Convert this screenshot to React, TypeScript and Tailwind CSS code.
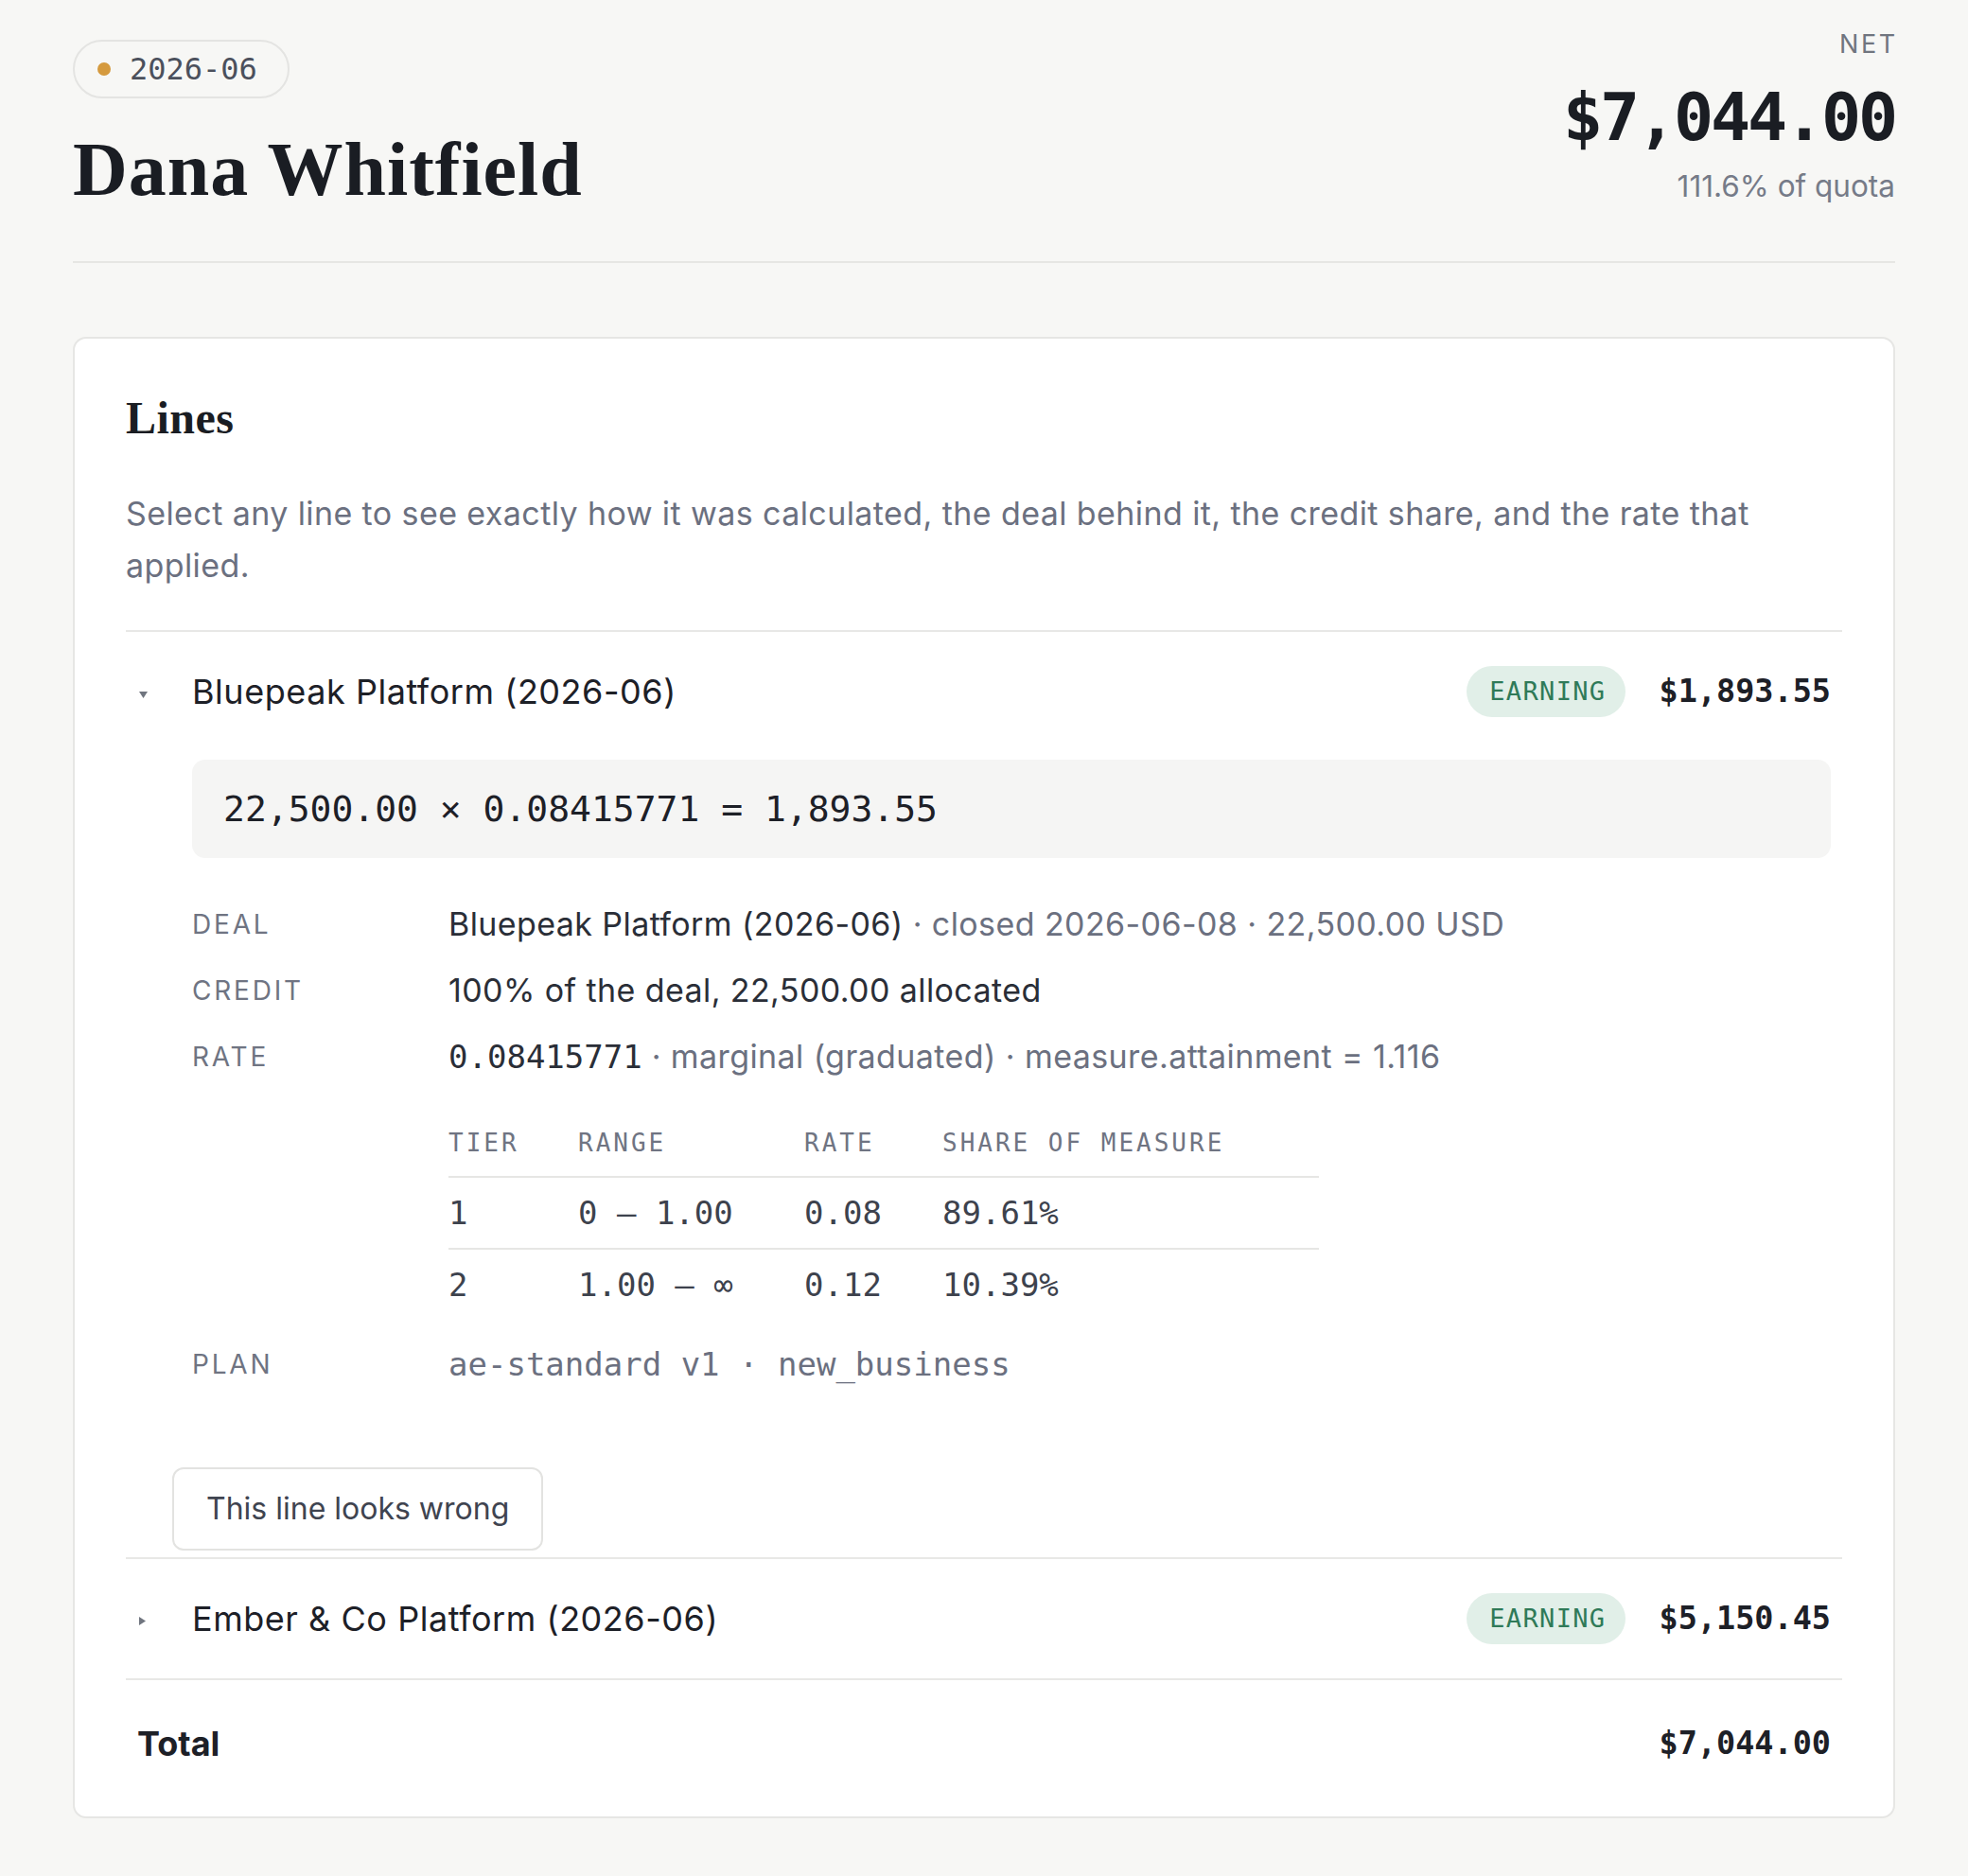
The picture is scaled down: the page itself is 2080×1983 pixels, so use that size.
import React from "react";

const MONO = "font-['DejaVu_Sans_Mono',monospace]";
const SERIF = "font-['Liberation_Serif',serif]";

function Caret({ open }: { open: boolean }) {
  return open ? (
    <svg width="9" height="7" viewBox="0 0 9 7" className="mt-[6px]">
      <path d="M0 0h9L4.5 7z" fill="#70757f" />
    </svg>
  ) : (
    <svg width="7" height="9" viewBox="0 0 7 9" className="mt-[4px]">
      <path d="M0 0l7 4.5L0 9z" fill="#70757f" />
    </svg>
  );
}

function Badge() {
  return (
    <span
      className={`${MONO} inline-flex h-[54px] items-center rounded-full bg-[#e1efe8] pl-[24px] pr-[21px] text-[27px] tracking-[0.05em] text-[#2f7a58]`}
    >
      EARNING
    </span>
  );
}

function LineHeader({ open, name, amount }: { open: boolean; name: string; amount: string }) {
  return (
    <div className="flex items-center px-[12px] py-[36px]">
      <span className="flex w-[58px] shrink-0 items-center pl-[2px]">
        <Caret open={open} />
      </span>
      <span className="flex-1 text-[36px] leading-[54px] tracking-[0.015em] text-[#1d2027]">{name}</span>
      <Badge />
      <span className={`${MONO} ml-[35px] text-[33.5px] font-bold leading-[54px] text-[#1d2027]`}>{amount}</span>
    </div>
  );
}

function DetailRow({ label, children, className = "" }: { label: string; children: React.ReactNode; className?: string }) {
  return (
    <div className={`flex h-[54px] items-center ${className}`}>
      <span className="w-[271px] shrink-0 text-[28px] uppercase tracking-[0.1em] text-[#6f7482]">{label}</span>
      <span className="text-[34px] leading-[54px] tracking-[0.012em]">{children}</span>
    </div>
  );
}

const tiers = [
  { tier: "1", range: "0 – 1.00", rate: "0.08", share: "89.61%" },
  { tier: "2", range: "1.00 – ∞", rate: "0.12", share: "10.39%" },
];

const TH = "pt-[12px] pb-[18px] text-[26px] font-normal leading-[34px] tracking-[0.115em] text-[#6f7482]";
const TD = "py-[17px] text-[34px] leading-[40px] text-[#3d424d]";

export default function App() {
  return (
    <div className="min-h-screen bg-[#f7f7f5] px-[77px] pt-[30px] pb-[62px] font-['Inter',sans-serif] text-[#1d2027]">
      <header className="flex items-start justify-between border-b-2 border-[#e6e6e3] pb-[57px]">
        <div className="mt-[12px]">
          <span className="inline-flex h-[62px] items-center gap-[20px] rounded-full border-2 border-[#e4e4e2] pl-[24px] pr-[32px]">
            <span className="h-[14px] w-[14px] rounded-full bg-[#d59a3e]" />
            <span className={`${MONO} text-[32px] text-[#4b505c]`}>2026-06</span>
          </span>
          <h1 className={`${SERIF} mt-[35px] text-[80px] font-bold leading-[80px] tracking-[0.012em] text-[#1a1d23]`}>
            Dana Whitfield
          </h1>
        </div>
        <div className="flex flex-col items-end text-right">
          <span className="-mr-[3px] text-[27px] leading-[34px] tracking-[0.1em] text-[#70757f]">NET</span>
          <span className={`${MONO} mt-[25px] text-[70px] font-bold leading-[70px] tracking-[-0.045em] text-[#1a1d23]`}>
            $7,044.00
          </span>
          <span className="mt-[20px] text-[31.5px] leading-[36px] text-[#767b88]">111.6% of quota</span>
        </div>
      </header>

      <section className="mt-[78px] rounded-[14px] border-2 border-[#e6e6e4] bg-white px-[54px] pt-[58px] pb-[50px]">
        <h2 className={`${SERIF} text-[48px] font-bold leading-[52px] tracking-[0.01em] text-[#1a1d23]`}>Lines</h2>
        <p className="mt-[48px] mb-[41px] text-[34px] leading-[54.5px] tracking-[0.012em] text-[#6b7080]">
          Select any line to see exactly how it was calculated, the deal behind it, the credit share, and the rate that
          applied.
        </p>

        {/* first line, expanded */}
        <div className="border-t-2 border-[#e8e8e6] pb-[7px]">
          <LineHeader open name="Bluepeak Platform (2026-06)" amount="$1,893.55" />
          <div className="pl-[70px] pr-[12px] pt-[9px]">
            <div className="flex h-[104px] items-center rounded-[14px] bg-[#f5f5f4] pl-[33px]">
              <span className={`${MONO} text-[38px] text-[#1d2027]`}>22,500.00 × 0.08415771 = 1,893.55</span>
            </div>

            <DetailRow label="Deal" className="mt-[43px]">
              <span className="text-[#2a2e37]">Bluepeak Platform (2026-06)</span>
              <span className="text-[#6b7080]"> · closed 2026-06-08 · 22,500.00 USD</span>
            </DetailRow>
            <DetailRow label="Credit" className="mt-[16px]">
              <span className="text-[#2a2e37]">100% of the deal, 22,500.00 allocated</span>
            </DetailRow>
            <DetailRow label="Rate" className="mt-[16px]">
              <span className={`${MONO} text-[34px] tracking-normal text-[#2a2e37]`}>0.08415771</span>
              <span className="text-[#6b7080]"> · marginal (graduated) · measure.attainment = 1.116</span>
            </DetailRow>

            <table className={`${MONO} mt-[35px] ml-[271px] w-[920px] border-collapse text-left`}>
              <thead>
                <tr className="border-b-2 border-[#e6e6e4]">
                  <th className={`w-[137px] ${TH}`}>TIER</th>
                  <th className={`w-[239px] ${TH}`}>RANGE</th>
                  <th className={`w-[146px] ${TH}`}>RATE</th>
                  <th className={TH}>SHARE OF MEASURE</th>
                </tr>
              </thead>
              <tbody>
                {tiers.map((t, i) => (
                  <tr key={t.tier} className={i === 0 ? "border-b-2 border-[#e6e6e4]" : ""}>
                    <td className={TD}>{t.tier}</td>
                    <td className={TD}>{t.range}</td>
                    <td className={TD}>{t.rate}</td>
                    <td className={TD}>{t.share}</td>
                  </tr>
                ))}
              </tbody>
            </table>

            <DetailRow label="Plan" className="mt-[20px]">
              <span className={`${MONO} text-[34px] tracking-normal text-[#6b7080]`}>ae-standard v1 · new_business</span>
            </DetailRow>
          </div>
          <div className="mt-[82px] pl-[49px]">
            <button className="h-[88px] rounded-[12px] border-2 border-[#e3e3e1] bg-white px-[34px] text-[32px] text-[#3f4450]">
              This line looks wrong
            </button>
          </div>
        </div>

        {/* second line, collapsed */}
        <div className="border-t-2 border-[#e8e8e6]">
          <LineHeader open={false} name="Ember & Co Platform (2026-06)" amount="$5,150.45" />
        </div>

        {/* total */}
        <div className="flex h-[96px] items-end border-t-2 border-[#e8e8e6] px-[12px]">
          <div className="flex h-[54px] w-full items-center justify-between">
            <span className="text-[36px] font-bold text-[#1d2027]">Total</span>
            <span className={`${MONO} text-[33.5px] font-bold text-[#1d2027]`}>$7,044.00</span>
          </div>
        </div>
      </section>
    </div>
  );
}
